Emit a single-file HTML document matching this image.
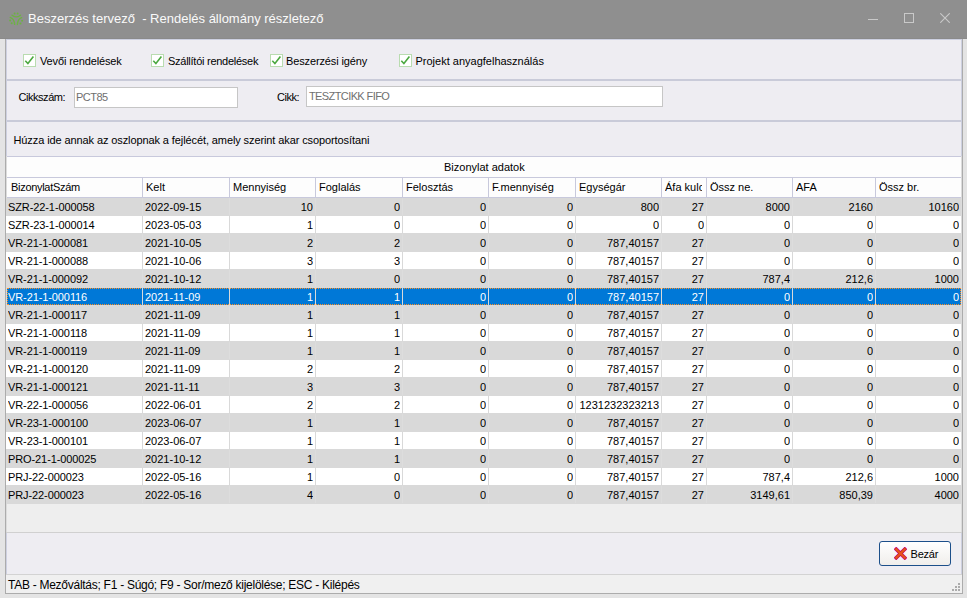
<!DOCTYPE html><html><head><meta charset="utf-8"><style>
*{margin:0;padding:0;box-sizing:border-box}
html,body{width:967px;height:598px;overflow:hidden;background:#e4e4e4;font-family:"Liberation Sans",sans-serif;font-size:11px;color:#000}
.a{position:absolute}
.t{position:absolute;white-space:pre;line-height:13px}
#title{left:0;top:0;width:967px;height:38px;background:#8f8f8f}
#ttext{left:28px;top:11px;font-size:13px;color:#fafafa;line-height:16px}
.cb{position:absolute;width:13px;height:13px;border:1px solid #b9dcb0;background:#fff}
.inp{position:absolute;background:#fff;border:1px solid #c6c6c6}
.cell{position:absolute;white-space:pre;line-height:13px;overflow:hidden}
</style></head><body>
<div id="title" class="a"></div>
<svg class="a" style="left:0;top:0" width="30" height="30" viewBox="0 0 30 30">
<g fill="none" stroke="#6db243" stroke-width="1.35" stroke-linecap="round">
<path d="M12 15.3 Q15.9 18.6 20.5 15.2"/><path d="M10.2 17.4 Q14.4 19 14.6 24.4"/><path d="M21.7 17.6 Q17.6 19 17.4 24.5"/>
</g>
<g fill="#6db243"><circle cx="14.6" cy="13.5" r="1"/><circle cx="17.6" cy="13.5" r="1"/><circle cx="10.1" cy="20.6" r="1"/><circle cx="11.6" cy="23.2" r="1"/><circle cx="22.1" cy="20.7" r="1"/><circle cx="20.5" cy="23.4" r="1"/></g>
</svg>
<div id="ttext" class="t">Beszerzés tervező  - Rendelés állomány részletező</div>
<div class="a" style="left:868px;top:19px;width:10px;height:1px;background:#c9c9c9"></div>
<div class="a" style="left:904px;top:13px;width:10px;height:10px;border:1px solid #c9c9c9"></div>
<svg class="a" style="left:940px;top:13px" width="10" height="10" viewBox="0 0 10 10"><path d="M0.3 0.3 L9.7 9.7 M9.7 0.3 L0.3 9.7" stroke="#c9c9c9" stroke-width="1.1"/></svg>
<div class="a" style="left:0;top:38px;width:967px;height:1px;background:#8a8a8a"></div>
<div class="a" style="left:5px;top:39px;width:958px;height:555px;background:#acacac"></div>
<div class="a" style="left:6px;top:39px;width:956px;height:554px;background:#eeedf2;border:1px solid #cdd0e0;border-bottom:none"></div>
<div class="cb" style="left:23px;top:54px"></div>
<svg class="a" style="left:23px;top:54px" width="13" height="13" viewBox="0 0 13 13"><path d="M2.3 6.8 L4.9 9.5 L10.4 2.6" fill="none" stroke="#4ba840" stroke-width="1.6"/></svg>
<div class="t" style="left:40px;top:55px;letter-spacing:-0.13px">Vevői rendelések</div>
<div class="cb" style="left:151px;top:54px"></div>
<svg class="a" style="left:151px;top:54px" width="13" height="13" viewBox="0 0 13 13"><path d="M2.3 6.8 L4.9 9.5 L10.4 2.6" fill="none" stroke="#4ba840" stroke-width="1.6"/></svg>
<div class="t" style="left:168px;top:55px;letter-spacing:-0.26px">Szállítói rendelések</div>
<div class="cb" style="left:270px;top:54px"></div>
<svg class="a" style="left:270px;top:54px" width="13" height="13" viewBox="0 0 13 13"><path d="M2.3 6.8 L4.9 9.5 L10.4 2.6" fill="none" stroke="#4ba840" stroke-width="1.6"/></svg>
<div class="t" style="left:286px;top:55px;letter-spacing:-0.13px">Beszerzési igény</div>
<div class="cb" style="left:399px;top:54px"></div>
<svg class="a" style="left:399px;top:54px" width="13" height="13" viewBox="0 0 13 13"><path d="M2.3 6.8 L4.9 9.5 L10.4 2.6" fill="none" stroke="#4ba840" stroke-width="1.6"/></svg>
<div class="t" style="left:415.5px;top:55px;letter-spacing:0px">Projekt anyagfelhasználás</div>
<div class="a" style="left:7px;top:79px;width:954px;height:2px;background:#c9cbd9"></div>
<div class="a" style="left:7px;top:120px;width:954px;height:2px;background:#c9cbd9"></div>
<div class="t" style="left:18.5px;top:91px;letter-spacing:-0.46px">Cikkszám:</div>
<div class="inp" style="left:74px;top:87px;width:164px;height:21px"></div>
<div class="t" style="left:76px;top:91px;color:#6f6f6f;letter-spacing:-0.5px">PCT85</div>
<div class="t" style="left:277px;top:91px;letter-spacing:-0.5px">Cikk:</div>
<div class="inp" style="left:306px;top:86px;width:357px;height:21px"></div>
<div class="t" style="left:309px;top:90px;color:#6f6f6f;letter-spacing:-0.6px">TESZTCIKK FIFO</div>
<div class="t" style="left:13.5px;top:134px;letter-spacing:-0.1px">Húzza ide annak az oszlopnak a fejlécét, amely szerint akar csoportosítani</div>
<div class="a" style="left:6px;top:156px;width:955px;height:377px;background:#eeeeee;border-left:1px solid #dcdcdc"></div>
<div class="a" style="left:7px;top:156px;width:954px;height:1px;background:#c8c9dc"></div>
<div class="a" style="left:7px;top:157px;width:954px;height:40px;background:#fdfdfd"></div>
<div class="a" style="left:7px;top:177px;width:954px;height:1px;background:#c8c9dc"></div>
<div class="a" style="left:7px;top:197px;width:954px;height:1px;background:#c8c9dc"></div>
<div class="t" style="left:444px;top:161px">Bizonylat adatok</div>
<div class="cell" style="left:11px;top:181px;width:128px;letter-spacing:-0.3px">BizonylatSzám</div>
<div class="a" style="left:142px;top:178px;width:1px;height:19px;background:#c8c9dc"></div>
<div class="cell" style="left:146px;top:181px;width:79px;letter-spacing:0px">Kelt</div>
<div class="a" style="left:229px;top:178px;width:1px;height:19px;background:#c8c9dc"></div>
<div class="cell" style="left:233px;top:181px;width:78px;letter-spacing:0px">Mennyiség</div>
<div class="a" style="left:315px;top:178px;width:1px;height:19px;background:#c8c9dc"></div>
<div class="cell" style="left:319px;top:181px;width:79px;letter-spacing:0px">Foglalás</div>
<div class="a" style="left:402px;top:178px;width:1px;height:19px;background:#c8c9dc"></div>
<div class="cell" style="left:406px;top:181px;width:78px;letter-spacing:0px">Felosztás</div>
<div class="a" style="left:488px;top:178px;width:1px;height:19px;background:#c8c9dc"></div>
<div class="cell" style="left:492px;top:181px;width:79px;letter-spacing:0px">F.mennyiség</div>
<div class="a" style="left:575px;top:178px;width:1px;height:19px;background:#c8c9dc"></div>
<div class="cell" style="left:579px;top:181px;width:78px;letter-spacing:0px">Egységár</div>
<div class="a" style="left:661px;top:178px;width:1px;height:19px;background:#c8c9dc"></div>
<div class="cell" style="left:665px;top:181px;width:37px;letter-spacing:0px">Áfa kulcs</div>
<div class="a" style="left:706px;top:178px;width:1px;height:19px;background:#c8c9dc"></div>
<div class="cell" style="left:710px;top:181px;width:78px;letter-spacing:0px">Össz ne.</div>
<div class="a" style="left:792px;top:178px;width:1px;height:19px;background:#c8c9dc"></div>
<div class="cell" style="left:796px;top:181px;width:75px;letter-spacing:0px">AFA</div>
<div class="a" style="left:875px;top:178px;width:1px;height:19px;background:#c8c9dc"></div>
<div class="cell" style="left:879px;top:181px;width:78px;letter-spacing:0px">Össz br.</div>
<div class="a" style="left:6px;top:198px;width:955px;height:18px;background:#d9d9d9"></div>
<div class="a" style="left:6px;top:198px;width:955px;height:17px;background:#d9d9d9"></div>
<div class="cell" style="left:8px;top:201px;width:132px;color:#000;letter-spacing:-0.1px">SZR-22-1-000058</div>
<div class="a" style="left:142px;top:198px;width:1px;height:17px;background:#dddddd"></div>
<div class="cell" style="left:145px;top:201px;width:83px;color:#000">2022-09-15</div>
<div class="a" style="left:229px;top:198px;width:1px;height:17px;background:#dddddd"></div>
<div class="cell" style="left:230px;top:201px;width:83px;text-align:right;color:#000">10</div>
<div class="a" style="left:315px;top:198px;width:1px;height:17px;background:#dddddd"></div>
<div class="cell" style="left:316px;top:201px;width:84px;text-align:right;color:#000">0</div>
<div class="a" style="left:402px;top:198px;width:1px;height:17px;background:#dddddd"></div>
<div class="cell" style="left:403px;top:201px;width:83px;text-align:right;color:#000">0</div>
<div class="a" style="left:488px;top:198px;width:1px;height:17px;background:#dddddd"></div>
<div class="cell" style="left:489px;top:201px;width:84px;text-align:right;color:#000">0</div>
<div class="a" style="left:575px;top:198px;width:1px;height:17px;background:#dddddd"></div>
<div class="cell" style="left:576px;top:201px;width:83px;text-align:right;color:#000">800</div>
<div class="a" style="left:661px;top:198px;width:1px;height:17px;background:#dddddd"></div>
<div class="cell" style="left:662px;top:201px;width:42px;text-align:right;color:#000">27</div>
<div class="a" style="left:706px;top:198px;width:1px;height:17px;background:#dddddd"></div>
<div class="cell" style="left:707px;top:201px;width:83px;text-align:right;color:#000">8000</div>
<div class="a" style="left:792px;top:198px;width:1px;height:17px;background:#dddddd"></div>
<div class="cell" style="left:793px;top:201px;width:80px;text-align:right;color:#000">2160</div>
<div class="a" style="left:875px;top:198px;width:1px;height:17px;background:#dddddd"></div>
<div class="cell" style="left:876px;top:201px;width:83px;text-align:right;color:#000">10160</div>
<div class="a" style="left:6px;top:216px;width:955px;height:18px;background:#d9d9d9"></div>
<div class="a" style="left:6px;top:216px;width:955px;height:17px;background:#ffffff"></div>
<div class="cell" style="left:8px;top:219px;width:132px;color:#000;letter-spacing:-0.1px">SZR-23-1-000014</div>
<div class="a" style="left:142px;top:216px;width:1px;height:17px;background:#d9d9d9"></div>
<div class="cell" style="left:145px;top:219px;width:83px;color:#000">2023-05-03</div>
<div class="a" style="left:229px;top:216px;width:1px;height:17px;background:#d9d9d9"></div>
<div class="cell" style="left:230px;top:219px;width:83px;text-align:right;color:#000">1</div>
<div class="a" style="left:315px;top:216px;width:1px;height:17px;background:#d9d9d9"></div>
<div class="cell" style="left:316px;top:219px;width:84px;text-align:right;color:#000">0</div>
<div class="a" style="left:402px;top:216px;width:1px;height:17px;background:#d9d9d9"></div>
<div class="cell" style="left:403px;top:219px;width:83px;text-align:right;color:#000">0</div>
<div class="a" style="left:488px;top:216px;width:1px;height:17px;background:#d9d9d9"></div>
<div class="cell" style="left:489px;top:219px;width:84px;text-align:right;color:#000">0</div>
<div class="a" style="left:575px;top:216px;width:1px;height:17px;background:#d9d9d9"></div>
<div class="cell" style="left:576px;top:219px;width:83px;text-align:right;color:#000">0</div>
<div class="a" style="left:661px;top:216px;width:1px;height:17px;background:#d9d9d9"></div>
<div class="cell" style="left:662px;top:219px;width:42px;text-align:right;color:#000">0</div>
<div class="a" style="left:706px;top:216px;width:1px;height:17px;background:#d9d9d9"></div>
<div class="cell" style="left:707px;top:219px;width:83px;text-align:right;color:#000">0</div>
<div class="a" style="left:792px;top:216px;width:1px;height:17px;background:#d9d9d9"></div>
<div class="cell" style="left:793px;top:219px;width:80px;text-align:right;color:#000">0</div>
<div class="a" style="left:875px;top:216px;width:1px;height:17px;background:#d9d9d9"></div>
<div class="cell" style="left:876px;top:219px;width:83px;text-align:right;color:#000">0</div>
<div class="a" style="left:6px;top:234px;width:955px;height:18px;background:#d9d9d9"></div>
<div class="a" style="left:6px;top:234px;width:955px;height:17px;background:#d9d9d9"></div>
<div class="cell" style="left:8px;top:237px;width:132px;color:#000;letter-spacing:-0.1px">VR-21-1-000081</div>
<div class="a" style="left:142px;top:234px;width:1px;height:17px;background:#dddddd"></div>
<div class="cell" style="left:145px;top:237px;width:83px;color:#000">2021-10-05</div>
<div class="a" style="left:229px;top:234px;width:1px;height:17px;background:#dddddd"></div>
<div class="cell" style="left:230px;top:237px;width:83px;text-align:right;color:#000">2</div>
<div class="a" style="left:315px;top:234px;width:1px;height:17px;background:#dddddd"></div>
<div class="cell" style="left:316px;top:237px;width:84px;text-align:right;color:#000">2</div>
<div class="a" style="left:402px;top:234px;width:1px;height:17px;background:#dddddd"></div>
<div class="cell" style="left:403px;top:237px;width:83px;text-align:right;color:#000">0</div>
<div class="a" style="left:488px;top:234px;width:1px;height:17px;background:#dddddd"></div>
<div class="cell" style="left:489px;top:237px;width:84px;text-align:right;color:#000">0</div>
<div class="a" style="left:575px;top:234px;width:1px;height:17px;background:#dddddd"></div>
<div class="cell" style="left:576px;top:237px;width:83px;text-align:right;color:#000">787,40157</div>
<div class="a" style="left:661px;top:234px;width:1px;height:17px;background:#dddddd"></div>
<div class="cell" style="left:662px;top:237px;width:42px;text-align:right;color:#000">27</div>
<div class="a" style="left:706px;top:234px;width:1px;height:17px;background:#dddddd"></div>
<div class="cell" style="left:707px;top:237px;width:83px;text-align:right;color:#000">0</div>
<div class="a" style="left:792px;top:234px;width:1px;height:17px;background:#dddddd"></div>
<div class="cell" style="left:793px;top:237px;width:80px;text-align:right;color:#000">0</div>
<div class="a" style="left:875px;top:234px;width:1px;height:17px;background:#dddddd"></div>
<div class="cell" style="left:876px;top:237px;width:83px;text-align:right;color:#000">0</div>
<div class="a" style="left:6px;top:252px;width:955px;height:18px;background:#d9d9d9"></div>
<div class="a" style="left:6px;top:252px;width:955px;height:17px;background:#ffffff"></div>
<div class="cell" style="left:8px;top:255px;width:132px;color:#000;letter-spacing:-0.1px">VR-21-1-000088</div>
<div class="a" style="left:142px;top:252px;width:1px;height:17px;background:#d9d9d9"></div>
<div class="cell" style="left:145px;top:255px;width:83px;color:#000">2021-10-06</div>
<div class="a" style="left:229px;top:252px;width:1px;height:17px;background:#d9d9d9"></div>
<div class="cell" style="left:230px;top:255px;width:83px;text-align:right;color:#000">3</div>
<div class="a" style="left:315px;top:252px;width:1px;height:17px;background:#d9d9d9"></div>
<div class="cell" style="left:316px;top:255px;width:84px;text-align:right;color:#000">3</div>
<div class="a" style="left:402px;top:252px;width:1px;height:17px;background:#d9d9d9"></div>
<div class="cell" style="left:403px;top:255px;width:83px;text-align:right;color:#000">0</div>
<div class="a" style="left:488px;top:252px;width:1px;height:17px;background:#d9d9d9"></div>
<div class="cell" style="left:489px;top:255px;width:84px;text-align:right;color:#000">0</div>
<div class="a" style="left:575px;top:252px;width:1px;height:17px;background:#d9d9d9"></div>
<div class="cell" style="left:576px;top:255px;width:83px;text-align:right;color:#000">787,40157</div>
<div class="a" style="left:661px;top:252px;width:1px;height:17px;background:#d9d9d9"></div>
<div class="cell" style="left:662px;top:255px;width:42px;text-align:right;color:#000">27</div>
<div class="a" style="left:706px;top:252px;width:1px;height:17px;background:#d9d9d9"></div>
<div class="cell" style="left:707px;top:255px;width:83px;text-align:right;color:#000">0</div>
<div class="a" style="left:792px;top:252px;width:1px;height:17px;background:#d9d9d9"></div>
<div class="cell" style="left:793px;top:255px;width:80px;text-align:right;color:#000">0</div>
<div class="a" style="left:875px;top:252px;width:1px;height:17px;background:#d9d9d9"></div>
<div class="cell" style="left:876px;top:255px;width:83px;text-align:right;color:#000">0</div>
<div class="a" style="left:6px;top:270px;width:955px;height:18px;background:#d9d9d9"></div>
<div class="a" style="left:6px;top:270px;width:955px;height:17px;background:#d9d9d9"></div>
<div class="cell" style="left:8px;top:273px;width:132px;color:#000;letter-spacing:-0.1px">VR-21-1-000092</div>
<div class="a" style="left:142px;top:270px;width:1px;height:17px;background:#dddddd"></div>
<div class="cell" style="left:145px;top:273px;width:83px;color:#000">2021-10-12</div>
<div class="a" style="left:229px;top:270px;width:1px;height:17px;background:#dddddd"></div>
<div class="cell" style="left:230px;top:273px;width:83px;text-align:right;color:#000">1</div>
<div class="a" style="left:315px;top:270px;width:1px;height:17px;background:#dddddd"></div>
<div class="cell" style="left:316px;top:273px;width:84px;text-align:right;color:#000">0</div>
<div class="a" style="left:402px;top:270px;width:1px;height:17px;background:#dddddd"></div>
<div class="cell" style="left:403px;top:273px;width:83px;text-align:right;color:#000">0</div>
<div class="a" style="left:488px;top:270px;width:1px;height:17px;background:#dddddd"></div>
<div class="cell" style="left:489px;top:273px;width:84px;text-align:right;color:#000">0</div>
<div class="a" style="left:575px;top:270px;width:1px;height:17px;background:#dddddd"></div>
<div class="cell" style="left:576px;top:273px;width:83px;text-align:right;color:#000">787,40157</div>
<div class="a" style="left:661px;top:270px;width:1px;height:17px;background:#dddddd"></div>
<div class="cell" style="left:662px;top:273px;width:42px;text-align:right;color:#000">27</div>
<div class="a" style="left:706px;top:270px;width:1px;height:17px;background:#dddddd"></div>
<div class="cell" style="left:707px;top:273px;width:83px;text-align:right;color:#000">787,4</div>
<div class="a" style="left:792px;top:270px;width:1px;height:17px;background:#dddddd"></div>
<div class="cell" style="left:793px;top:273px;width:80px;text-align:right;color:#000">212,6</div>
<div class="a" style="left:875px;top:270px;width:1px;height:17px;background:#dddddd"></div>
<div class="cell" style="left:876px;top:273px;width:83px;text-align:right;color:#000">1000</div>
<div class="a" style="left:6px;top:288px;width:955px;height:18px;background:#d9d9d9"></div>
<div class="a" style="left:7px;top:288px;width:954px;height:17px;background:#0078d7"></div>
<div class="a" style="left:7px;top:288px;width:954px;height:17px;border:1px dotted #ff8f22"></div>
<div class="cell" style="left:8px;top:291px;width:132px;color:#fff;letter-spacing:-0.1px">VR-21-1-000116</div>
<div class="a" style="left:142px;top:288px;width:1px;height:17px;background:#d9d9d9"></div>
<div class="cell" style="left:145px;top:291px;width:83px;color:#fff">2021-11-09</div>
<div class="a" style="left:229px;top:288px;width:1px;height:17px;background:#d9d9d9"></div>
<div class="cell" style="left:230px;top:291px;width:83px;text-align:right;color:#fff">1</div>
<div class="a" style="left:315px;top:288px;width:1px;height:17px;background:#d9d9d9"></div>
<div class="cell" style="left:316px;top:291px;width:84px;text-align:right;color:#fff">1</div>
<div class="a" style="left:402px;top:288px;width:1px;height:17px;background:#d9d9d9"></div>
<div class="cell" style="left:403px;top:291px;width:83px;text-align:right;color:#fff">0</div>
<div class="a" style="left:488px;top:288px;width:1px;height:17px;background:#d9d9d9"></div>
<div class="cell" style="left:489px;top:291px;width:84px;text-align:right;color:#fff">0</div>
<div class="a" style="left:575px;top:288px;width:1px;height:17px;background:#d9d9d9"></div>
<div class="cell" style="left:576px;top:291px;width:83px;text-align:right;color:#fff">787,40157</div>
<div class="a" style="left:661px;top:288px;width:1px;height:17px;background:#d9d9d9"></div>
<div class="cell" style="left:662px;top:291px;width:42px;text-align:right;color:#fff">27</div>
<div class="a" style="left:706px;top:288px;width:1px;height:17px;background:#d9d9d9"></div>
<div class="cell" style="left:707px;top:291px;width:83px;text-align:right;color:#fff">0</div>
<div class="a" style="left:792px;top:288px;width:1px;height:17px;background:#d9d9d9"></div>
<div class="cell" style="left:793px;top:291px;width:80px;text-align:right;color:#fff">0</div>
<div class="a" style="left:875px;top:288px;width:1px;height:17px;background:#d9d9d9"></div>
<div class="cell" style="left:876px;top:291px;width:83px;text-align:right;color:#fff">0</div>
<div class="a" style="left:6px;top:306px;width:955px;height:18px;background:#d9d9d9"></div>
<div class="a" style="left:6px;top:306px;width:955px;height:17px;background:#d9d9d9"></div>
<div class="cell" style="left:8px;top:309px;width:132px;color:#000;letter-spacing:-0.1px">VR-21-1-000117</div>
<div class="a" style="left:142px;top:306px;width:1px;height:17px;background:#dddddd"></div>
<div class="cell" style="left:145px;top:309px;width:83px;color:#000">2021-11-09</div>
<div class="a" style="left:229px;top:306px;width:1px;height:17px;background:#dddddd"></div>
<div class="cell" style="left:230px;top:309px;width:83px;text-align:right;color:#000">1</div>
<div class="a" style="left:315px;top:306px;width:1px;height:17px;background:#dddddd"></div>
<div class="cell" style="left:316px;top:309px;width:84px;text-align:right;color:#000">1</div>
<div class="a" style="left:402px;top:306px;width:1px;height:17px;background:#dddddd"></div>
<div class="cell" style="left:403px;top:309px;width:83px;text-align:right;color:#000">0</div>
<div class="a" style="left:488px;top:306px;width:1px;height:17px;background:#dddddd"></div>
<div class="cell" style="left:489px;top:309px;width:84px;text-align:right;color:#000">0</div>
<div class="a" style="left:575px;top:306px;width:1px;height:17px;background:#dddddd"></div>
<div class="cell" style="left:576px;top:309px;width:83px;text-align:right;color:#000">787,40157</div>
<div class="a" style="left:661px;top:306px;width:1px;height:17px;background:#dddddd"></div>
<div class="cell" style="left:662px;top:309px;width:42px;text-align:right;color:#000">27</div>
<div class="a" style="left:706px;top:306px;width:1px;height:17px;background:#dddddd"></div>
<div class="cell" style="left:707px;top:309px;width:83px;text-align:right;color:#000">0</div>
<div class="a" style="left:792px;top:306px;width:1px;height:17px;background:#dddddd"></div>
<div class="cell" style="left:793px;top:309px;width:80px;text-align:right;color:#000">0</div>
<div class="a" style="left:875px;top:306px;width:1px;height:17px;background:#dddddd"></div>
<div class="cell" style="left:876px;top:309px;width:83px;text-align:right;color:#000">0</div>
<div class="a" style="left:6px;top:324px;width:955px;height:18px;background:#d9d9d9"></div>
<div class="a" style="left:6px;top:324px;width:955px;height:17px;background:#ffffff"></div>
<div class="cell" style="left:8px;top:327px;width:132px;color:#000;letter-spacing:-0.1px">VR-21-1-000118</div>
<div class="a" style="left:142px;top:324px;width:1px;height:17px;background:#d9d9d9"></div>
<div class="cell" style="left:145px;top:327px;width:83px;color:#000">2021-11-09</div>
<div class="a" style="left:229px;top:324px;width:1px;height:17px;background:#d9d9d9"></div>
<div class="cell" style="left:230px;top:327px;width:83px;text-align:right;color:#000">1</div>
<div class="a" style="left:315px;top:324px;width:1px;height:17px;background:#d9d9d9"></div>
<div class="cell" style="left:316px;top:327px;width:84px;text-align:right;color:#000">1</div>
<div class="a" style="left:402px;top:324px;width:1px;height:17px;background:#d9d9d9"></div>
<div class="cell" style="left:403px;top:327px;width:83px;text-align:right;color:#000">0</div>
<div class="a" style="left:488px;top:324px;width:1px;height:17px;background:#d9d9d9"></div>
<div class="cell" style="left:489px;top:327px;width:84px;text-align:right;color:#000">0</div>
<div class="a" style="left:575px;top:324px;width:1px;height:17px;background:#d9d9d9"></div>
<div class="cell" style="left:576px;top:327px;width:83px;text-align:right;color:#000">787,40157</div>
<div class="a" style="left:661px;top:324px;width:1px;height:17px;background:#d9d9d9"></div>
<div class="cell" style="left:662px;top:327px;width:42px;text-align:right;color:#000">27</div>
<div class="a" style="left:706px;top:324px;width:1px;height:17px;background:#d9d9d9"></div>
<div class="cell" style="left:707px;top:327px;width:83px;text-align:right;color:#000">0</div>
<div class="a" style="left:792px;top:324px;width:1px;height:17px;background:#d9d9d9"></div>
<div class="cell" style="left:793px;top:327px;width:80px;text-align:right;color:#000">0</div>
<div class="a" style="left:875px;top:324px;width:1px;height:17px;background:#d9d9d9"></div>
<div class="cell" style="left:876px;top:327px;width:83px;text-align:right;color:#000">0</div>
<div class="a" style="left:6px;top:342px;width:955px;height:18px;background:#d9d9d9"></div>
<div class="a" style="left:6px;top:342px;width:955px;height:17px;background:#d9d9d9"></div>
<div class="cell" style="left:8px;top:345px;width:132px;color:#000;letter-spacing:-0.1px">VR-21-1-000119</div>
<div class="a" style="left:142px;top:342px;width:1px;height:17px;background:#dddddd"></div>
<div class="cell" style="left:145px;top:345px;width:83px;color:#000">2021-11-09</div>
<div class="a" style="left:229px;top:342px;width:1px;height:17px;background:#dddddd"></div>
<div class="cell" style="left:230px;top:345px;width:83px;text-align:right;color:#000">1</div>
<div class="a" style="left:315px;top:342px;width:1px;height:17px;background:#dddddd"></div>
<div class="cell" style="left:316px;top:345px;width:84px;text-align:right;color:#000">1</div>
<div class="a" style="left:402px;top:342px;width:1px;height:17px;background:#dddddd"></div>
<div class="cell" style="left:403px;top:345px;width:83px;text-align:right;color:#000">0</div>
<div class="a" style="left:488px;top:342px;width:1px;height:17px;background:#dddddd"></div>
<div class="cell" style="left:489px;top:345px;width:84px;text-align:right;color:#000">0</div>
<div class="a" style="left:575px;top:342px;width:1px;height:17px;background:#dddddd"></div>
<div class="cell" style="left:576px;top:345px;width:83px;text-align:right;color:#000">787,40157</div>
<div class="a" style="left:661px;top:342px;width:1px;height:17px;background:#dddddd"></div>
<div class="cell" style="left:662px;top:345px;width:42px;text-align:right;color:#000">27</div>
<div class="a" style="left:706px;top:342px;width:1px;height:17px;background:#dddddd"></div>
<div class="cell" style="left:707px;top:345px;width:83px;text-align:right;color:#000">0</div>
<div class="a" style="left:792px;top:342px;width:1px;height:17px;background:#dddddd"></div>
<div class="cell" style="left:793px;top:345px;width:80px;text-align:right;color:#000">0</div>
<div class="a" style="left:875px;top:342px;width:1px;height:17px;background:#dddddd"></div>
<div class="cell" style="left:876px;top:345px;width:83px;text-align:right;color:#000">0</div>
<div class="a" style="left:6px;top:360px;width:955px;height:18px;background:#d9d9d9"></div>
<div class="a" style="left:6px;top:360px;width:955px;height:17px;background:#ffffff"></div>
<div class="cell" style="left:8px;top:363px;width:132px;color:#000;letter-spacing:-0.1px">VR-21-1-000120</div>
<div class="a" style="left:142px;top:360px;width:1px;height:17px;background:#d9d9d9"></div>
<div class="cell" style="left:145px;top:363px;width:83px;color:#000">2021-11-09</div>
<div class="a" style="left:229px;top:360px;width:1px;height:17px;background:#d9d9d9"></div>
<div class="cell" style="left:230px;top:363px;width:83px;text-align:right;color:#000">2</div>
<div class="a" style="left:315px;top:360px;width:1px;height:17px;background:#d9d9d9"></div>
<div class="cell" style="left:316px;top:363px;width:84px;text-align:right;color:#000">2</div>
<div class="a" style="left:402px;top:360px;width:1px;height:17px;background:#d9d9d9"></div>
<div class="cell" style="left:403px;top:363px;width:83px;text-align:right;color:#000">0</div>
<div class="a" style="left:488px;top:360px;width:1px;height:17px;background:#d9d9d9"></div>
<div class="cell" style="left:489px;top:363px;width:84px;text-align:right;color:#000">0</div>
<div class="a" style="left:575px;top:360px;width:1px;height:17px;background:#d9d9d9"></div>
<div class="cell" style="left:576px;top:363px;width:83px;text-align:right;color:#000">787,40157</div>
<div class="a" style="left:661px;top:360px;width:1px;height:17px;background:#d9d9d9"></div>
<div class="cell" style="left:662px;top:363px;width:42px;text-align:right;color:#000">27</div>
<div class="a" style="left:706px;top:360px;width:1px;height:17px;background:#d9d9d9"></div>
<div class="cell" style="left:707px;top:363px;width:83px;text-align:right;color:#000">0</div>
<div class="a" style="left:792px;top:360px;width:1px;height:17px;background:#d9d9d9"></div>
<div class="cell" style="left:793px;top:363px;width:80px;text-align:right;color:#000">0</div>
<div class="a" style="left:875px;top:360px;width:1px;height:17px;background:#d9d9d9"></div>
<div class="cell" style="left:876px;top:363px;width:83px;text-align:right;color:#000">0</div>
<div class="a" style="left:6px;top:378px;width:955px;height:18px;background:#d9d9d9"></div>
<div class="a" style="left:6px;top:378px;width:955px;height:17px;background:#d9d9d9"></div>
<div class="cell" style="left:8px;top:381px;width:132px;color:#000;letter-spacing:-0.1px">VR-21-1-000121</div>
<div class="a" style="left:142px;top:378px;width:1px;height:17px;background:#dddddd"></div>
<div class="cell" style="left:145px;top:381px;width:83px;color:#000">2021-11-11</div>
<div class="a" style="left:229px;top:378px;width:1px;height:17px;background:#dddddd"></div>
<div class="cell" style="left:230px;top:381px;width:83px;text-align:right;color:#000">3</div>
<div class="a" style="left:315px;top:378px;width:1px;height:17px;background:#dddddd"></div>
<div class="cell" style="left:316px;top:381px;width:84px;text-align:right;color:#000">3</div>
<div class="a" style="left:402px;top:378px;width:1px;height:17px;background:#dddddd"></div>
<div class="cell" style="left:403px;top:381px;width:83px;text-align:right;color:#000">0</div>
<div class="a" style="left:488px;top:378px;width:1px;height:17px;background:#dddddd"></div>
<div class="cell" style="left:489px;top:381px;width:84px;text-align:right;color:#000">0</div>
<div class="a" style="left:575px;top:378px;width:1px;height:17px;background:#dddddd"></div>
<div class="cell" style="left:576px;top:381px;width:83px;text-align:right;color:#000">787,40157</div>
<div class="a" style="left:661px;top:378px;width:1px;height:17px;background:#dddddd"></div>
<div class="cell" style="left:662px;top:381px;width:42px;text-align:right;color:#000">27</div>
<div class="a" style="left:706px;top:378px;width:1px;height:17px;background:#dddddd"></div>
<div class="cell" style="left:707px;top:381px;width:83px;text-align:right;color:#000">0</div>
<div class="a" style="left:792px;top:378px;width:1px;height:17px;background:#dddddd"></div>
<div class="cell" style="left:793px;top:381px;width:80px;text-align:right;color:#000">0</div>
<div class="a" style="left:875px;top:378px;width:1px;height:17px;background:#dddddd"></div>
<div class="cell" style="left:876px;top:381px;width:83px;text-align:right;color:#000">0</div>
<div class="a" style="left:6px;top:396px;width:955px;height:18px;background:#d9d9d9"></div>
<div class="a" style="left:6px;top:396px;width:955px;height:17px;background:#ffffff"></div>
<div class="cell" style="left:8px;top:399px;width:132px;color:#000;letter-spacing:-0.1px">VR-22-1-000056</div>
<div class="a" style="left:142px;top:396px;width:1px;height:17px;background:#d9d9d9"></div>
<div class="cell" style="left:145px;top:399px;width:83px;color:#000">2022-06-01</div>
<div class="a" style="left:229px;top:396px;width:1px;height:17px;background:#d9d9d9"></div>
<div class="cell" style="left:230px;top:399px;width:83px;text-align:right;color:#000">2</div>
<div class="a" style="left:315px;top:396px;width:1px;height:17px;background:#d9d9d9"></div>
<div class="cell" style="left:316px;top:399px;width:84px;text-align:right;color:#000">2</div>
<div class="a" style="left:402px;top:396px;width:1px;height:17px;background:#d9d9d9"></div>
<div class="cell" style="left:403px;top:399px;width:83px;text-align:right;color:#000">0</div>
<div class="a" style="left:488px;top:396px;width:1px;height:17px;background:#d9d9d9"></div>
<div class="cell" style="left:489px;top:399px;width:84px;text-align:right;color:#000">0</div>
<div class="a" style="left:575px;top:396px;width:1px;height:17px;background:#d9d9d9"></div>
<div class="cell" style="left:576px;top:399px;width:83px;text-align:right;color:#000">1231232323213</div>
<div class="a" style="left:661px;top:396px;width:1px;height:17px;background:#d9d9d9"></div>
<div class="cell" style="left:662px;top:399px;width:42px;text-align:right;color:#000">27</div>
<div class="a" style="left:706px;top:396px;width:1px;height:17px;background:#d9d9d9"></div>
<div class="cell" style="left:707px;top:399px;width:83px;text-align:right;color:#000">0</div>
<div class="a" style="left:792px;top:396px;width:1px;height:17px;background:#d9d9d9"></div>
<div class="cell" style="left:793px;top:399px;width:80px;text-align:right;color:#000">0</div>
<div class="a" style="left:875px;top:396px;width:1px;height:17px;background:#d9d9d9"></div>
<div class="cell" style="left:876px;top:399px;width:83px;text-align:right;color:#000">0</div>
<div class="a" style="left:6px;top:414px;width:955px;height:18px;background:#d9d9d9"></div>
<div class="a" style="left:6px;top:414px;width:955px;height:17px;background:#d9d9d9"></div>
<div class="cell" style="left:8px;top:417px;width:132px;color:#000;letter-spacing:-0.1px">VR-23-1-000100</div>
<div class="a" style="left:142px;top:414px;width:1px;height:17px;background:#dddddd"></div>
<div class="cell" style="left:145px;top:417px;width:83px;color:#000">2023-06-07</div>
<div class="a" style="left:229px;top:414px;width:1px;height:17px;background:#dddddd"></div>
<div class="cell" style="left:230px;top:417px;width:83px;text-align:right;color:#000">1</div>
<div class="a" style="left:315px;top:414px;width:1px;height:17px;background:#dddddd"></div>
<div class="cell" style="left:316px;top:417px;width:84px;text-align:right;color:#000">1</div>
<div class="a" style="left:402px;top:414px;width:1px;height:17px;background:#dddddd"></div>
<div class="cell" style="left:403px;top:417px;width:83px;text-align:right;color:#000">0</div>
<div class="a" style="left:488px;top:414px;width:1px;height:17px;background:#dddddd"></div>
<div class="cell" style="left:489px;top:417px;width:84px;text-align:right;color:#000">0</div>
<div class="a" style="left:575px;top:414px;width:1px;height:17px;background:#dddddd"></div>
<div class="cell" style="left:576px;top:417px;width:83px;text-align:right;color:#000">787,40157</div>
<div class="a" style="left:661px;top:414px;width:1px;height:17px;background:#dddddd"></div>
<div class="cell" style="left:662px;top:417px;width:42px;text-align:right;color:#000">27</div>
<div class="a" style="left:706px;top:414px;width:1px;height:17px;background:#dddddd"></div>
<div class="cell" style="left:707px;top:417px;width:83px;text-align:right;color:#000">0</div>
<div class="a" style="left:792px;top:414px;width:1px;height:17px;background:#dddddd"></div>
<div class="cell" style="left:793px;top:417px;width:80px;text-align:right;color:#000">0</div>
<div class="a" style="left:875px;top:414px;width:1px;height:17px;background:#dddddd"></div>
<div class="cell" style="left:876px;top:417px;width:83px;text-align:right;color:#000">0</div>
<div class="a" style="left:6px;top:432px;width:955px;height:18px;background:#d9d9d9"></div>
<div class="a" style="left:6px;top:432px;width:955px;height:17px;background:#ffffff"></div>
<div class="cell" style="left:8px;top:435px;width:132px;color:#000;letter-spacing:-0.1px">VR-23-1-000101</div>
<div class="a" style="left:142px;top:432px;width:1px;height:17px;background:#d9d9d9"></div>
<div class="cell" style="left:145px;top:435px;width:83px;color:#000">2023-06-07</div>
<div class="a" style="left:229px;top:432px;width:1px;height:17px;background:#d9d9d9"></div>
<div class="cell" style="left:230px;top:435px;width:83px;text-align:right;color:#000">1</div>
<div class="a" style="left:315px;top:432px;width:1px;height:17px;background:#d9d9d9"></div>
<div class="cell" style="left:316px;top:435px;width:84px;text-align:right;color:#000">1</div>
<div class="a" style="left:402px;top:432px;width:1px;height:17px;background:#d9d9d9"></div>
<div class="cell" style="left:403px;top:435px;width:83px;text-align:right;color:#000">0</div>
<div class="a" style="left:488px;top:432px;width:1px;height:17px;background:#d9d9d9"></div>
<div class="cell" style="left:489px;top:435px;width:84px;text-align:right;color:#000">0</div>
<div class="a" style="left:575px;top:432px;width:1px;height:17px;background:#d9d9d9"></div>
<div class="cell" style="left:576px;top:435px;width:83px;text-align:right;color:#000">787,40157</div>
<div class="a" style="left:661px;top:432px;width:1px;height:17px;background:#d9d9d9"></div>
<div class="cell" style="left:662px;top:435px;width:42px;text-align:right;color:#000">27</div>
<div class="a" style="left:706px;top:432px;width:1px;height:17px;background:#d9d9d9"></div>
<div class="cell" style="left:707px;top:435px;width:83px;text-align:right;color:#000">0</div>
<div class="a" style="left:792px;top:432px;width:1px;height:17px;background:#d9d9d9"></div>
<div class="cell" style="left:793px;top:435px;width:80px;text-align:right;color:#000">0</div>
<div class="a" style="left:875px;top:432px;width:1px;height:17px;background:#d9d9d9"></div>
<div class="cell" style="left:876px;top:435px;width:83px;text-align:right;color:#000">0</div>
<div class="a" style="left:6px;top:450px;width:955px;height:18px;background:#d9d9d9"></div>
<div class="a" style="left:6px;top:450px;width:955px;height:17px;background:#d9d9d9"></div>
<div class="cell" style="left:8px;top:453px;width:132px;color:#000;letter-spacing:-0.1px">PRO-21-1-000025</div>
<div class="a" style="left:142px;top:450px;width:1px;height:17px;background:#dddddd"></div>
<div class="cell" style="left:145px;top:453px;width:83px;color:#000">2021-10-12</div>
<div class="a" style="left:229px;top:450px;width:1px;height:17px;background:#dddddd"></div>
<div class="cell" style="left:230px;top:453px;width:83px;text-align:right;color:#000">1</div>
<div class="a" style="left:315px;top:450px;width:1px;height:17px;background:#dddddd"></div>
<div class="cell" style="left:316px;top:453px;width:84px;text-align:right;color:#000">1</div>
<div class="a" style="left:402px;top:450px;width:1px;height:17px;background:#dddddd"></div>
<div class="cell" style="left:403px;top:453px;width:83px;text-align:right;color:#000">0</div>
<div class="a" style="left:488px;top:450px;width:1px;height:17px;background:#dddddd"></div>
<div class="cell" style="left:489px;top:453px;width:84px;text-align:right;color:#000">0</div>
<div class="a" style="left:575px;top:450px;width:1px;height:17px;background:#dddddd"></div>
<div class="cell" style="left:576px;top:453px;width:83px;text-align:right;color:#000">787,40157</div>
<div class="a" style="left:661px;top:450px;width:1px;height:17px;background:#dddddd"></div>
<div class="cell" style="left:662px;top:453px;width:42px;text-align:right;color:#000">27</div>
<div class="a" style="left:706px;top:450px;width:1px;height:17px;background:#dddddd"></div>
<div class="cell" style="left:707px;top:453px;width:83px;text-align:right;color:#000">0</div>
<div class="a" style="left:792px;top:450px;width:1px;height:17px;background:#dddddd"></div>
<div class="cell" style="left:793px;top:453px;width:80px;text-align:right;color:#000">0</div>
<div class="a" style="left:875px;top:450px;width:1px;height:17px;background:#dddddd"></div>
<div class="cell" style="left:876px;top:453px;width:83px;text-align:right;color:#000">0</div>
<div class="a" style="left:6px;top:468px;width:955px;height:18px;background:#d9d9d9"></div>
<div class="a" style="left:6px;top:468px;width:955px;height:17px;background:#ffffff"></div>
<div class="cell" style="left:8px;top:471px;width:132px;color:#000;letter-spacing:-0.1px">PRJ-22-000023</div>
<div class="a" style="left:142px;top:468px;width:1px;height:17px;background:#d9d9d9"></div>
<div class="cell" style="left:145px;top:471px;width:83px;color:#000">2022-05-16</div>
<div class="a" style="left:229px;top:468px;width:1px;height:17px;background:#d9d9d9"></div>
<div class="cell" style="left:230px;top:471px;width:83px;text-align:right;color:#000">1</div>
<div class="a" style="left:315px;top:468px;width:1px;height:17px;background:#d9d9d9"></div>
<div class="cell" style="left:316px;top:471px;width:84px;text-align:right;color:#000">0</div>
<div class="a" style="left:402px;top:468px;width:1px;height:17px;background:#d9d9d9"></div>
<div class="cell" style="left:403px;top:471px;width:83px;text-align:right;color:#000">0</div>
<div class="a" style="left:488px;top:468px;width:1px;height:17px;background:#d9d9d9"></div>
<div class="cell" style="left:489px;top:471px;width:84px;text-align:right;color:#000">0</div>
<div class="a" style="left:575px;top:468px;width:1px;height:17px;background:#d9d9d9"></div>
<div class="cell" style="left:576px;top:471px;width:83px;text-align:right;color:#000">787,40157</div>
<div class="a" style="left:661px;top:468px;width:1px;height:17px;background:#d9d9d9"></div>
<div class="cell" style="left:662px;top:471px;width:42px;text-align:right;color:#000">27</div>
<div class="a" style="left:706px;top:468px;width:1px;height:17px;background:#d9d9d9"></div>
<div class="cell" style="left:707px;top:471px;width:83px;text-align:right;color:#000">787,4</div>
<div class="a" style="left:792px;top:468px;width:1px;height:17px;background:#d9d9d9"></div>
<div class="cell" style="left:793px;top:471px;width:80px;text-align:right;color:#000">212,6</div>
<div class="a" style="left:875px;top:468px;width:1px;height:17px;background:#d9d9d9"></div>
<div class="cell" style="left:876px;top:471px;width:83px;text-align:right;color:#000">1000</div>
<div class="a" style="left:6px;top:486px;width:955px;height:18px;background:#d9d9d9"></div>
<div class="a" style="left:6px;top:486px;width:955px;height:17px;background:#d9d9d9"></div>
<div class="cell" style="left:8px;top:489px;width:132px;color:#000;letter-spacing:-0.1px">PRJ-22-000023</div>
<div class="a" style="left:142px;top:486px;width:1px;height:17px;background:#dddddd"></div>
<div class="cell" style="left:145px;top:489px;width:83px;color:#000">2022-05-16</div>
<div class="a" style="left:229px;top:486px;width:1px;height:17px;background:#dddddd"></div>
<div class="cell" style="left:230px;top:489px;width:83px;text-align:right;color:#000">4</div>
<div class="a" style="left:315px;top:486px;width:1px;height:17px;background:#dddddd"></div>
<div class="cell" style="left:316px;top:489px;width:84px;text-align:right;color:#000">0</div>
<div class="a" style="left:402px;top:486px;width:1px;height:17px;background:#dddddd"></div>
<div class="cell" style="left:403px;top:489px;width:83px;text-align:right;color:#000">0</div>
<div class="a" style="left:488px;top:486px;width:1px;height:17px;background:#dddddd"></div>
<div class="cell" style="left:489px;top:489px;width:84px;text-align:right;color:#000">0</div>
<div class="a" style="left:575px;top:486px;width:1px;height:17px;background:#dddddd"></div>
<div class="cell" style="left:576px;top:489px;width:83px;text-align:right;color:#000">787,40157</div>
<div class="a" style="left:661px;top:486px;width:1px;height:17px;background:#dddddd"></div>
<div class="cell" style="left:662px;top:489px;width:42px;text-align:right;color:#000">27</div>
<div class="a" style="left:706px;top:486px;width:1px;height:17px;background:#dddddd"></div>
<div class="cell" style="left:707px;top:489px;width:83px;text-align:right;color:#000">3149,61</div>
<div class="a" style="left:792px;top:486px;width:1px;height:17px;background:#dddddd"></div>
<div class="cell" style="left:793px;top:489px;width:80px;text-align:right;color:#000">850,39</div>
<div class="a" style="left:875px;top:486px;width:1px;height:17px;background:#dddddd"></div>
<div class="cell" style="left:876px;top:489px;width:83px;text-align:right;color:#000">4000</div>
<div class="a" style="left:961px;top:156px;width:1px;height:377px;background:#dcdcdc"></div>
<div class="a" style="left:6px;top:532px;width:956px;height:1px;background:#d0d0d0"></div>
<div class="a" style="left:879px;top:541px;width:72px;height:25px;border:1px solid #1c4f8a;border-radius:3px;background:linear-gradient(#ffffff,#f0eeeb)"></div>
<svg class="a" style="left:894px;top:547px" width="13" height="13" viewBox="0 0 13 13"><path d="M2.2 2.2 L10.8 10.8 M10.8 2.2 L2.2 10.8" stroke="#ee22ee" stroke-width="3.8" stroke-linecap="square"/><path d="M2.2 2.2 L10.8 10.8 M10.8 2.2 L2.2 10.8" stroke="#a82c12" stroke-width="3.0" stroke-linecap="square"/><path d="M2.2 2.2 L10.8 10.8 M10.8 2.2 L2.2 10.8" stroke="#ea5020" stroke-width="2.1" stroke-linecap="square"/></svg>
<div class="t" style="left:910.5px;top:548px;letter-spacing:-0.2px">Bezár</div>
<div class="a" style="left:6px;top:574px;width:956px;height:1px;background:#d3d3d3"></div>
<div class="a" style="left:6px;top:575px;width:956px;height:18px;background:#f0f0f0"></div>
<div class="t" style="left:8px;top:579px;font-size:12px;letter-spacing:-0.27px">TAB - Mezőváltás; F1 - Súgó; F9 - Sor/mező kijelölése; ESC - Kilépés</div>
<div class="a" style="left:958px;top:583px;width:2px;height:2px;background:#ababab"></div>
<div class="a" style="left:955px;top:586px;width:2px;height:2px;background:#ababab"></div>
<div class="a" style="left:958px;top:586px;width:2px;height:2px;background:#ababab"></div>
<div class="a" style="left:952px;top:589px;width:2px;height:2px;background:#ababab"></div>
<div class="a" style="left:955px;top:589px;width:2px;height:2px;background:#ababab"></div>
<div class="a" style="left:958px;top:589px;width:2px;height:2px;background:#ababab"></div>
</body></html>
